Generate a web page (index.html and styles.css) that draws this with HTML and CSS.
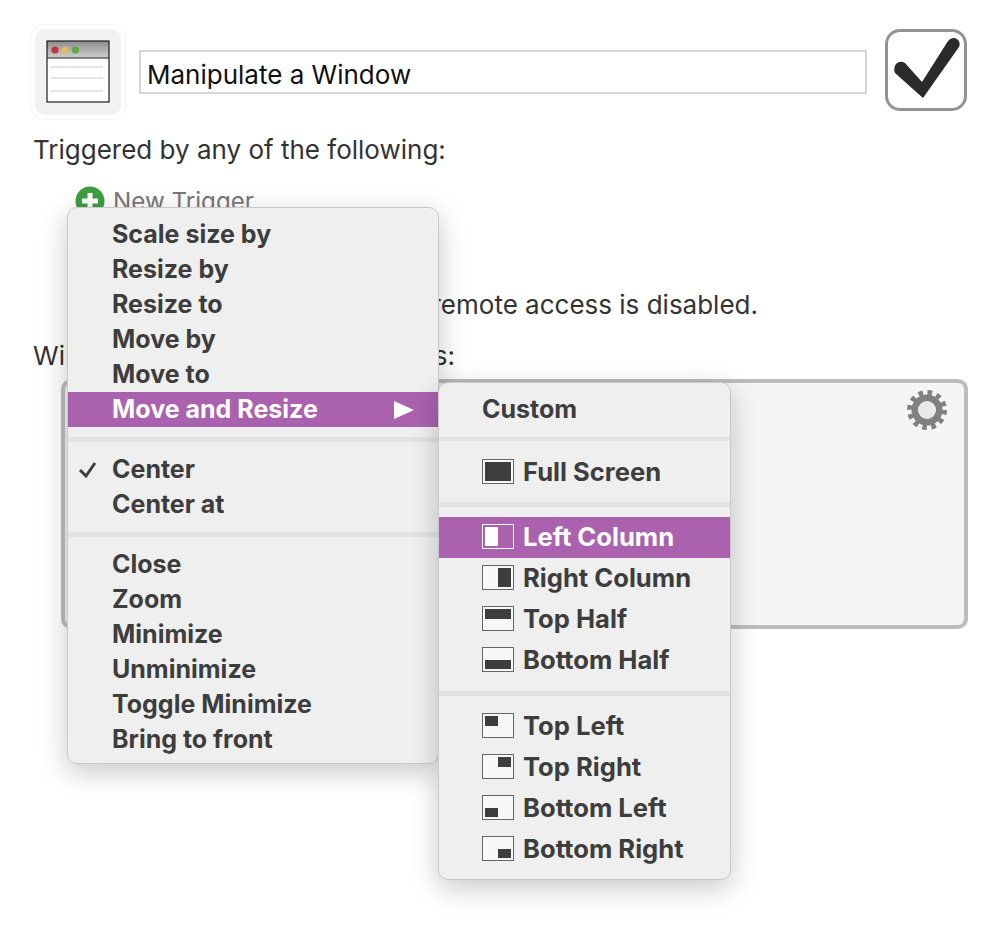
FILE: index.html
```html
<!DOCTYPE html>
<html lang="en">
<head>
    <meta charset="UTF-8">
    <title>Manipulate a Window</title>
    <link rel="stylesheet" href="styles.css">
</head>
<body>
    <div class="page">
        <div class="title-row">
            <div class="tile">
                <svg width="64" height="64" viewBox="0 0 64 64">
                    <defs>
                        <linearGradient id="bar" x1="0" y1="0" x2="0" y2="1">
                            <stop offset="0" stop-color="#8c8c8c"/>
                            <stop offset="1" stop-color="#cfcfcf"/>
                        </linearGradient>
                    </defs>
                    <rect x="1" y="1" width="62" height="61" fill="#fff"/>
                    <rect x="1" y="1" width="62" height="17" fill="url(#bar)"/>
                    <circle cx="9" cy="10" r="3.6" fill="#c8323a"/>
                    <circle cx="19" cy="10" r="3.6" fill="#e5b95c"/>
                    <circle cx="29.500" cy="10" r="3.600" fill="#58ad3c"/>
                    <path d="M5 27H57M5 38H57M5 51H57" stroke="#c9c9c9" stroke-width="1"/>
                    <path d="M1 18H63" stroke="#222" stroke-width="1"/>
                    <rect x="1" y="1" width="62" height="61" fill="none" stroke="#1c1c1c" stroke-width="1.200"/>
                </svg>
            </div>
            <div class="name-field">Manipulate a Window</div>
            <div class="enable-box">
                <svg width="74" height="74" viewBox="0 0 74 74">
                    <path d="M7 31Q11 27 16 30L33 49L59 8Q63 3 68 6Q72 9 70 14L34 65L6 40Q4 35 7 31Z" fill="#2a2a2a"/>
                </svg>
            </div>
        </div>

        <p class="label">Triggered by any of the following:</p>

        <div class="new-trigger">
            <svg width="30" height="30" viewBox="0 0 30 30">
                <circle cx="15" cy="15" r="14.500" fill="#3d9e3f"/>
                <path d="M15 7V23M7 15H23" stroke="#fff" stroke-width="5"/>
            </svg>
            <span>New Trigger</span>
        </div>

        <p class="label remote-note">remote access is disabled.</p>
        <p class="label actions-label">Will execute the following actions:</p>

        <div class="actions-box">
            <svg class="gear" width="42" height="42" viewBox="0 0 42 42">
                <circle cx="21" cy="21" r="17.500" fill="none" stroke="#808080" stroke-width="5" stroke-dasharray="4.600 4.560"/>
                <circle cx="21" cy="21" r="12" fill="none" stroke="#808080" stroke-width="7"/>
                <circle cx="21" cy="21" r="9" fill="#e9e9e9"/>
            </svg>
        </div>

        <div class="menu main-menu">
            <div class="item">Scale size by</div>
            <div class="item">Resize by</div>
            <div class="item">Resize to</div>
            <div class="item">Move by</div>
            <div class="item">Move to</div>
            <div class="item active">Move and Resize<span class="arrow"></span></div>
            <div class="sep"></div>
            <div class="item">
                <svg class="tick" width="20" height="18" viewBox="0 0 20 18"><path d="M2 9L8 15L17 2" fill="none" stroke="#3d3d3d" stroke-width="3"/></svg>
                Center
            </div>
            <div class="item">Center at</div>
            <div class="sep"></div>
            <div class="item">Close</div>
            <div class="item">Zoom</div>
            <div class="item">Minimize</div>
            <div class="item">Unminimize</div>
            <div class="item">Toggle Minimize</div>
            <div class="item">Bring to front</div>
        </div>

        <div class="menu sub-menu">
            <div class="item">Custom</div>
            <div class="sep"></div>
            <div class="item tall"><span class="win"><i class="full"></i></span>Full Screen</div>
            <div class="sep"></div>
            <div class="item tall active"><span class="win"><i class="col"></i></span>Left Column</div>
            <div class="item tall"><span class="win right"><i class="col"></i></span>Right Column</div>
            <div class="item tall"><span class="win"><i class="half"></i></span>Top Half</div>
            <div class="item tall"><span class="win bottom"><i class="half"></i></span>Bottom Half</div>
            <div class="sep"></div>
            <div class="item tall"><span class="win"><i class="quarter"></i></span>Top Left</div>
            <div class="item tall"><span class="win right"><i class="quarter"></i></span>Top Right</div>
            <div class="item tall"><span class="win bottom"><i class="quarter"></i></span>Bottom Left</div>
            <div class="item tall"><span class="win right bottom"><i class="quarter"></i></span>Bottom Right</div>
        </div>
    </div>
</body>
</html>
```

FILE: styles.css
```css
html, body {
    margin: 0;
    padding: 0;
    background-color: #fff;
}

.page {
    position: relative;
    width: 1000px;
    height: 926px;
    overflow: hidden;
    box-sizing: border-box;
    padding: 25px 33px 0 31px;
    font-family: Inter, "Noto Sans", sans-serif;
    color: #333;
}

.title-row {
    display: flex;
    align-items: center;
}

.tile {
    width: 86px;
    height: 86px;
    display: flex;
    align-items: center;
    justify-content: center;
    background-color: #f2f2f2;
    border: 4px solid #fff;
    border-radius: 14px;
    box-shadow: 0 0 0 1px #f4f4f4;
    flex: none;
}

.name-field {
    width: 728px;
    height: 44px;
    line-height: 46px;
    margin: 0 18px 0 14px;
    padding-left: 6px;
    box-sizing: border-box;
    border: 2px solid #d6d6d6;
    background-color: #fff;
    color: #111;
    font-size: 26px;
    white-space: nowrap;
}

.enable-box {
    width: 82px;
    height: 82px;
    margin-bottom: 4px;
    box-sizing: border-box;
    border: 3px solid #939393;
    border-radius: 15px;
    display: flex;
    align-items: center;
    justify-content: center;
    flex: none;
}

.label {
    margin: 0 0 0 2px;
    font-size: 26px;
    line-height: 30px;
    white-space: nowrap;
}

.title-row + .label {
    margin-top: 16px;
}

.new-trigger {
    display: flex;
    align-items: center;
    gap: 8px;
    margin: 21px 0 0 44px;
    height: 30px;
    color: #777;
    font-size: 24.200px;
}

.remote-note {
    margin-top: 74px;
    width: 725px;
    text-align: right;
}

.actions-label {
    margin-top: 21px;
    letter-spacing: 0.14px;
}

.actions-box {
    display: flex;
    justify-content: flex-end;
    width: 907px;
    height: 250px;
    margin: 8px 0 0 30px;
    padding: 6px 16px;
    box-sizing: border-box;
    border: 4px solid #bdbdbd;
    border-radius: 10px;
    background-color: #f5f5f5;
}

.gear {
    flex: none;
}

.menu {
    position: absolute;
    box-sizing: border-box;
    background-color: #efefef;
    border: 1px solid #c9c9c9;
    border-radius: 10px;
    box-shadow: 0 8px 28px rgba(0, 0, 0, 0.22);
    color: #3d3d3d;
    font-size: 25px;
    font-weight: 700;
}

.main-menu {
    left: 67px;
    top: 207px;
    width: 372px;
    height: 557px;
    padding: 8.500px 0;
}

.sub-menu {
    left: 438px;
    top: 382px;
    width: 293px;
    height: 498px;
    padding: 8.500px 0;
}

.item {
    position: relative;
    display: flex;
    align-items: center;
    height: 35px;
    padding-left: 44px;
    white-space: nowrap;
}

.sub-menu .item {
    padding-left: 43px;
}

.sub-menu .tall {
    box-sizing: border-box;
    height: 41px;
    padding-bottom: 1px;
    font-size: 25.600px;
}

.active {
    background-color: #aa62ae;
    color: #fff;
}

.sep {
    height: 5px;
    margin: 10px 0;
    background-color: #e2e2e2;
}

.sub-menu .sep {
    height: 4.700px;
}

.arrow {
    position: absolute;
    right: 24px;
    top: 9px;
    border-left: 20px solid #fff;
    border-top: 9px solid transparent;
    border-bottom: 9px solid transparent;
}

.tick {
    position: absolute;
    left: 10px;
    top: 9px;
}

.win {
    display: flex;
    flex: none;
    width: 32px;
    height: 25px;
    margin-right: 9px;
    padding: 2px;
    box-sizing: border-box;
    border: 1px solid #666;
    background-color: #f7f7f7;
}

.win.right {
    justify-content: flex-end;
}

.win.bottom {
    align-items: flex-end;
}

.win i {
    display: block;
    background-color: #3d3d3d;
}

.full {
    width: 100%;
    height: 100%;
}

.col {
    width: 50%;
    height: 100%;
}

.half {
    width: 100%;
    height: 50%;
}

.quarter {
    width: 50%;
    height: 50%;
}

.active .win {
    border-color: #fff;
    background-color: transparent;
}

.active .win i {
    background-color: #fff;
}
```
